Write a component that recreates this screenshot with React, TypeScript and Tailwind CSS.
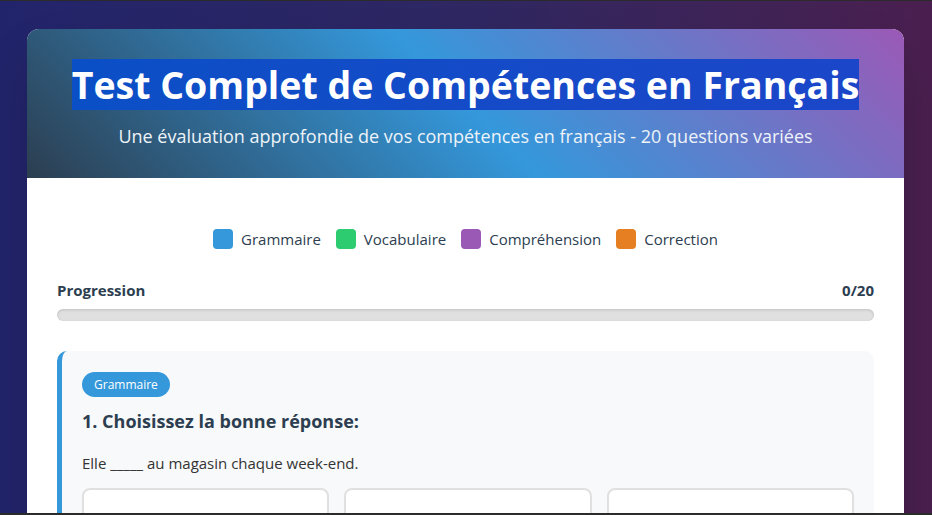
import React from "react";

const categories = [
  { name: "Grammaire", color: "bg-[#3498db]" },
  { name: "Vocabulaire", color: "bg-[#2ecc71]" },
  { name: "Compréhension", color: "bg-[#9b59b6]" },
  { name: "Correction", color: "bg-[#e67e22]" },
];

const App = () => {
  return (
    <div
      className="flex h-[515px] flex-col overflow-hidden bg-[#2b2b2b]"
      style={{ fontFamily: '"Open Sans", "Noto Sans", sans-serif' }}
    >
      <div className="mt-px flex-1 overflow-hidden bg-gradient-to-r from-[#22246b] via-[#2e2762] to-[#4a1f4f] px-[27px] pt-[28px]">
        <div className="overflow-hidden rounded-t-[12px] bg-white shadow-2xl w-[877px]">
          {/* header */}
          <div className="bg-[linear-gradient(45deg,#2c3e50_0%,#3498db_50%,#9b59b6_100%)] px-6 pt-[30px] pb-[30px] text-center">
            <h1 className="text-[37.5px] font-bold leading-[52px] text-white">
              <span className="bg-gradient-to-r from-[#0a4fc6] to-[#1b46c9]">
                Test Complet de Compétences en Français
              </span>
            </h1>
            <p className="mt-[13px] text-[18px] leading-[24px] text-[#eef3f8]">
              Une évaluation approfondie de vos compétences en français - 20 questions variées
            </p>
          </div>

          {/* body */}
          <div className="px-[30px] pt-[51px]">
            <div className="flex items-center justify-center gap-[15px]">
              {categories.map((c) => (
                <div key={c.name} className="flex items-center gap-[8px]">
                  <span className={`h-5 w-5 rounded-[4px] ${c.color}`} />
                  <span className="text-[15px] leading-5 text-[#2c3e50]">{c.name}</span>
                </div>
              ))}
            </div>

            <div className="mt-[31px] flex items-center justify-between text-[15px] font-bold leading-5 text-[#2c3e50]">
              <span>Progression</span>
              <span>0/20</span>
            </div>
            <div className="mt-[9px] h-3 w-full rounded-full bg-[#e0e0e0] shadow-[inset_0_1px_3px_rgba(0,0,0,0.15)]" />

            <div className="mt-[30px] rounded-[10px] border-l-[5px] border-[#3498db] bg-[#f8f9fa] px-5 pt-5 pb-5">
              <span className="inline-block rounded-full bg-[#3498db] px-3 text-[12px] leading-[25px] text-white">
                Grammaire
              </span>
              <h2 className="mt-[10px] text-[18px] font-bold leading-[28px] text-[#2c3e50]">
                1. Choisissez la bonne réponse:
              </h2>
              <p className="mt-[17px] text-[15px] leading-[22px] text-[#333]">
                Elle _____ au magasin chaque week-end.
              </p>
              <div className="mt-[14px] grid grid-cols-3 gap-[15px]">
                {["va", "vont", "allons"].map((o) => (
                  <div
                    key={o}
                    className="h-[50px] rounded-[8px] border-2 border-[#e0e0e0] bg-white"
                  />
                ))}
              </div>
            </div>
          </div>
        </div>
      </div>
      <div className="h-[2px] bg-[#2b2b2b]" />
    </div>
  );
};

export default App;
